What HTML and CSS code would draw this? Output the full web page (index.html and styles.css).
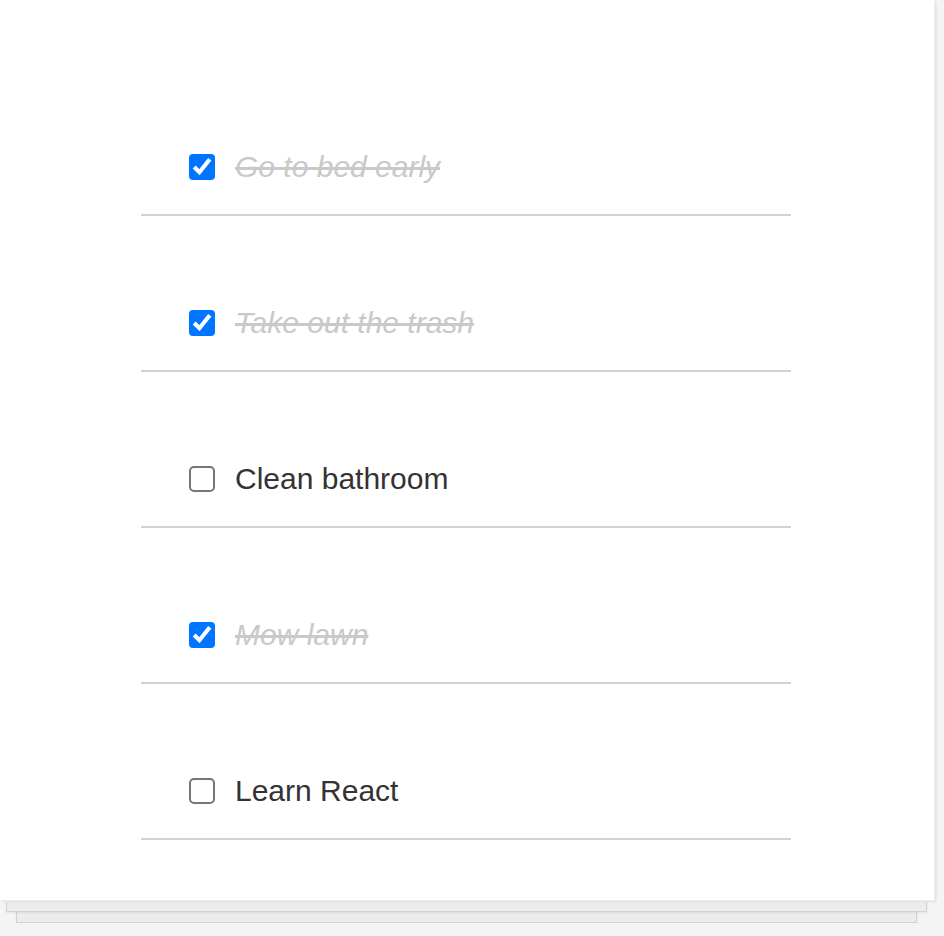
FILE: index.html
```html
<!DOCTYPE html>
<html>
<head>
<meta charset="utf-8">
<link rel="stylesheet" href="styles.css">
</head>
<body>
<div class="app">
  <div class="panel">
    <ul class="list">
      <li class="item done"><input type="checkbox" class="check" checked><span class="label">Go to bed early</span></li>
      <li class="item done"><input type="checkbox" class="check" checked><span class="label">Take out the trash</span></li>
      <li class="item"><input type="checkbox" class="check"><span class="label">Clean bathroom</span></li>
      <li class="item done"><input type="checkbox" class="check" checked><span class="label">Mow lawn</span></li>
      <li class="item"><input type="checkbox" class="check"><span class="label">Learn React</span></li>
    </ul>
  </div>
  <div class="sheet sheet-1"></div>
  <div class="sheet sheet-2"></div>
</div>
</body>
</html>
```
FILE: styles.css
```css
html, body {
  margin: 0;
  padding: 0;
}
body {
  background: #f4f4f4;
  font-family: "Liberation Sans", Arial, sans-serif;
  color: #333;
}
.app {
  width: 934px;
}
.panel {
  position: relative;
  z-index: 2;
  background: #fff;
  padding: 60px 0;
  box-shadow: 1px 1px 0 #ececec, 2px 2px 0 #e6e6e6, 3px 2px 2px rgba(0, 0, 0, 0.06);
}
.list {
  width: 650px;
  margin: 0 0 0 141px;
  padding: 0;
  list-style: none;
}
.item {
  display: flex;
  align-items: center;
  gap: 20px;
  height: 34px;
  padding: 90px 0 30px 48px;
  border-bottom: 2px solid #d2d2d2;
}
.check {
  zoom: 2;
  width: 13px;
  height: 13px;
  margin: 0;
  flex: none;
}
.label {
  font-size: 30px;
  line-height: 34px;
  color: #333;
}
.done .label {
  font-style: italic;
  text-decoration: line-through;
  color: #c9c9c9;
}
.sheet {
  height: 10px;
  background: #ececec;
  border: 1px solid #d2d2d2;
  border-top: none;
  box-shadow: 0 1px 2px rgba(0, 0, 0, 0.08);
  position: relative;
}
.sheet-1 {
  margin: 0 7px 0 6px;
  height: 11px;
  z-index: 1;
}
.sheet-2 {
  margin: 0 17px 0 16px;
  height: 10px;
}
```
